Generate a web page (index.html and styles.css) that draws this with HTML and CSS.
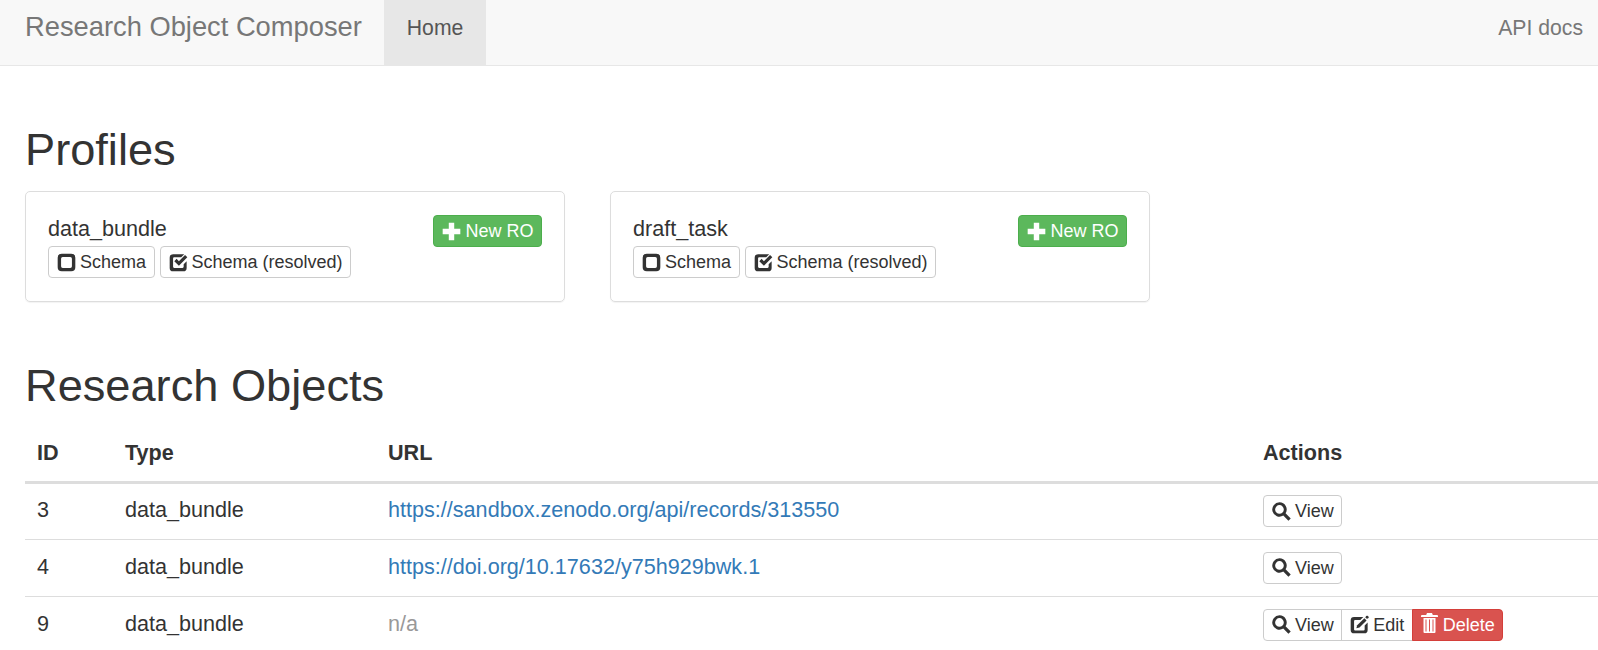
FILE: index.html
```html
<!DOCTYPE html>
<html lang="en">
<head>
  <meta charset="UTF-8" />
  <title>Research Object Composer</title>
  <link rel="stylesheet" href="styles.css">
</head>
<body>
  <svg class="icon-defs" width="0" height="0">
    <symbol id="i-plus" viewBox="0 0 14 14"><path d="M5 .5h4v4.500h4.500v4H9v4.500H5V9H.5V5H5z"/></symbol>
    <symbol id="i-unchecked" viewBox="0 0 14 14"><path fill-rule="evenodd" d="M3.500.5h7a3 3 0 0 1 3 3v7a3 3 0 0 1-3 3h-7a3 3 0 0 1-3-3v-7a3 3 0 0 1 3-3zm.7 2.500a1.200 1.200 0 0 0-1.200 1.200v5.600A1.200 1.200 0 0 0 4.200 11h5.600a1.200 1.200 0 0 0 1.200-1.200V4.200A1.200 1.200 0 0 0 9.800 3z"/></symbol>
    <symbol id="i-check" viewBox="0 0 14 14"><path d="M3 1h8.200L9 3.200H3.800a.8.800 0 0 0-.8.800v6.200a.8.800 0 0 0 .8.800H10a.8.800 0 0 0 .8-.8V8.300l2.200-2.200V11a2.500 2.500 0 0 1-2.500 2.500h-7.500A2.500 2.500 0 0 1 .5 11V3.500A2.500 2.500 0 0 1 3 1z"/><path d="M3.900 6l1.700-1.700 1.700 1.700 4.500-4.500 1.700 1.700-6.200 6.200z"/></symbol>
    <symbol id="i-search" viewBox="0 0 14 14"><path fill-rule="evenodd" d="M5.500.2a5.300 5.300 0 0 1 4.500 8.100l3.800 3.800-1.700 1.700-3.800-3.800A5.300 5.300 0 1 1 5.500.2zm0 2.100a3.200 3.200 0 1 0 0 6.400 3.200 3.200 0 0 0 0-6.400z"/></symbol>
    <symbol id="i-edit" viewBox="0 0 14 14"><path d="M3 1.500h6.800L7.600 3.700H3.800a.8.800 0 0 0-.8.800v6.200a.8.800 0 0 0 .8.800H10a.8.800 0 0 0 .8-.8V7.800l2.200-2.200V11a2.500 2.500 0 0 1-2.500 2.500h-7.500A2.500 2.500 0 0 1 .5 11V4A2.500 2.500 0 0 1 3 1.500z"/><path d="M10.600 2.400l1.600 1.600-5.200 5.200-2.300.6.600-2.300z"/><circle cx="12.600" cy="1.600" r="1.100"/></symbol>
    <symbol id="i-trash" viewBox="0 0 17 20"><path fill-rule="evenodd" d="M6 0h5l.8 2H16a1 1 0 0 1 1 1v1H0V3a1 1 0 0 1 1-1h4.200zM2.500 5h12v14a1 1 0 0 1-1 1h-10a1 1 0 0 1-1-1zm2 1.500v12h1v-12zm3.500 0v12h1v-12zm3.500 0v12h1v-12z"/></symbol>
  </svg>

  <nav class="navbar">
    <a class="brand" href="#">Research Object Composer</a>
    <a class="nav-link active" href="#">Home</a>
    <a class="nav-link nav-right" href="#">API docs</a>
  </nav>

  <main class="content">
    <h1 class="profiles-title">Profiles</h1>
    <div class="profiles">
      <div class="profile">
        <a class="btn btn-success new-ro" href="#"><svg class="icon"><use href="#i-plus"/></svg> New RO</a>
        <div class="profile-name">data_bundle</div>
        <div class="profile-links">
          <a class="btn" href="#"><svg class="icon"><use href="#i-unchecked"/></svg> Schema</a>
          <a class="btn" href="#"><svg class="icon"><use href="#i-check"/></svg> Schema (resolved)</a>
        </div>
      </div>
      <div class="profile">
        <a class="btn btn-success new-ro" href="#"><svg class="icon"><use href="#i-plus"/></svg> New RO</a>
        <div class="profile-name">draft_task</div>
        <div class="profile-links">
          <a class="btn" href="#"><svg class="icon"><use href="#i-unchecked"/></svg> Schema</a>
          <a class="btn" href="#"><svg class="icon"><use href="#i-check"/></svg> Schema (resolved)</a>
        </div>
      </div>
    </div>

    <h1 class="objects-title">Research Objects</h1>
    <table class="table">
      <thead>
        <tr>
          <th class="col-id">ID</th>
          <th class="col-type">Type</th>
          <th class="col-url">URL</th>
          <th>Actions</th>
        </tr>
      </thead>
      <tbody>
        <tr>
          <td>3</td>
          <td>data_bundle</td>
          <td><a href="#">https://sandbox.zenodo.org/api/records/313550</a></td>
          <td><a class="btn" href="#"><svg class="icon"><use href="#i-search"/></svg> View</a></td>
        </tr>
        <tr>
          <td>4</td>
          <td>data_bundle</td>
          <td><a href="#">https://doi.org/10.17632/y75h929bwk.1</a></td>
          <td><a class="btn" href="#"><svg class="icon"><use href="#i-search"/></svg> View</a></td>
        </tr>
        <tr>
          <td>9</td>
          <td>data_bundle</td>
          <td><span class="muted">n/a</span></td>
          <td>
            <div class="btn-group">
              <a class="btn" href="#"><svg class="icon"><use href="#i-search"/></svg> View</a>
              <a class="btn" href="#"><svg class="icon"><use href="#i-edit"/></svg> Edit</a>
              <a class="btn btn-danger" href="#"><svg class="icon icon-trash"><use href="#i-trash"/></svg> Delete</a>
            </div>
          </td>
        </tr>
      </tbody>
    </table>
  </main>
</body>
</html>
```

FILE: styles.css
```css
html, body {
  margin: 0;
  padding: 0;
  height: 100%;
  overflow: hidden;
}

body {
  font-family: "Liberation Sans", Arial, sans-serif;
  font-size: 21.6px;
  line-height: 26px;
  color: #333;
  background: #fff;
}

a {
  color: #337ab7;
  text-decoration: none;
}

.icon-defs {
  position: absolute;
}

.navbar {
  display: flex;
  height: 65px;
  padding-left: 25px;
  background: #f8f8f8;
  border-bottom: 1px solid #e7e7e7;
}

.brand {
  font-size: 27.3px;
  line-height: 54px;
  color: #777;
  margin-right: 22px;
}

.nav-link {
  font-size: 21.2px;
  line-height: 55px;
  padding: 0 23px;
  color: #777;
}

.nav-link.active {
  color: #555;
  background: #e7e7e7;
}

.nav-right {
  margin-left: auto;
  padding-right: 15px;
}

.content {
  padding: 0 0 0 25px;
}

h1 {
  font-size: 45.2px;
  font-weight: 500;
  line-height: 52px;
  margin: 58px 0 15px;
}

.profiles {
  display: flex;
  gap: 45px;
}

.profile {
  box-sizing: border-box;
  width: 540px;
  height: 111px;
  padding: 24px 22px 0;
  border: 1px solid #ddd;
  border-radius: 5px;
  box-shadow: 0 1px 1px rgba(0, 0, 0, .05);
}

.profile-name {
  line-height: 26px;
}

.profile-links {
  display: flex;
  gap: 5px;
  margin-top: 4px;
}

.new-ro {
  float: right;
  margin-top: -1px;
}

.btn {
  display: inline-flex;
  align-items: center;
  gap: 4px;
  box-sizing: border-box;
  height: 32px;
  padding: 0 7.5px 0 8px;
  font-size: 18px;
  line-height: 24px;
  color: #333;
  background: #fff;
  border: 1px solid #ccc;
  border-radius: 4px;
  white-space: nowrap;
}

.btn-success {
  color: #fff;
  background: #5cb85c;
  border-color: #4cae4c;
}

.btn-danger {
  color: #fff;
  background: #d9534f;
  border-color: #d43f3a;
}

.icon {
  width: 19px;
  height: 19px;
  fill: currentColor;
}

.icon-trash {
  width: 17px;
  height: 20px;
  margin-top: -3px;
  margin-right: 1px;
}

.btn-group {
  display: inline-flex;
}

.btn-group .btn + .btn {
  margin-left: -1px;
}

.btn-group .btn-danger {
  margin-left: -3px;
}

.btn-group .btn:not(:first-child) {
  border-top-left-radius: 0;
  border-bottom-left-radius: 0;
}

.btn-group .btn:not(:last-child) {
  border-top-right-radius: 0;
  border-bottom-right-radius: 0;
}

.objects-title {
  margin-top: 58px;
  margin-bottom: 11px;
}

.table {
  width: 100%;
  border-collapse: collapse;
  table-layout: fixed;
}

.table th, .table td {
  box-sizing: border-box;
  padding: 0 12px;
  text-align: left;
  vertical-align: middle;
}

.table th {
  height: 59px;
  padding-top: 2px;
  font-weight: bold;
  border-bottom: 3px solid #ddd;
}

.table td {
  height: 57px;
  border-bottom: 1px solid #ddd;
}

.table td:not(:last-child) {
  padding-bottom: 2px;
}

.col-id {
  width: 88px;
}

.col-type {
  width: 263px;
}

.col-url {
  width: 875px;
}

.muted {
  color: #999;
}
```
